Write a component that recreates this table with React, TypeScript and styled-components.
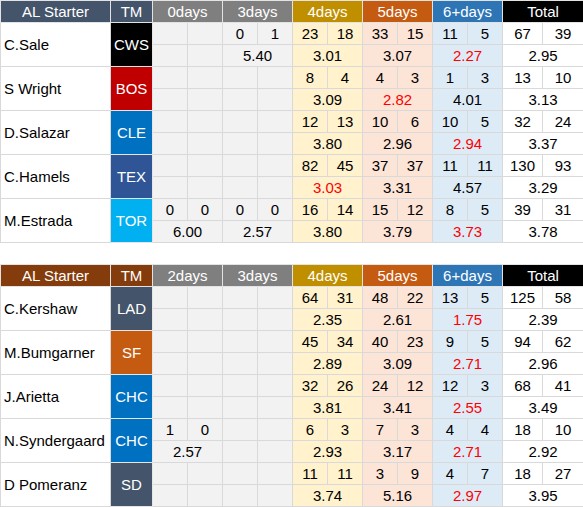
import React from "react";
import styled, { createGlobalStyle } from "styled-components";

type Tone = "grey" | "gold" | "orange" | "blue" | "white";

interface Split {
    w: number;
    l: number;
    era: string;
    red?: boolean;
}

interface Starter {
    name: string;
    team: string;
    teamColor: string;
    splits: (Split | null)[];
}

interface TableData {
    headColor: string;
    firstDays: string;
    rows: Starter[];
}

const tones: Tone[] = ["grey", "grey", "gold", "orange", "blue", "white"];

const headColors: Record<Tone, string> = {
    grey: "#7f7f7f",
    gold: "#bf8f00",
    orange: "#c55a11",
    blue: "#2e75b6",
    white: "#000000",
};

const cellColors: Record<Tone, string> = {
    grey: "#f2f2f2",
    gold: "#fff2cc",
    orange: "#fce4d6",
    blue: "#ddebf7",
    white: "#ffffff",
};

const tables: TableData[] = [
    {
        headColor: "#44546a",
        firstDays: "0days",
        rows: [
            {
                name: "C.Sale",
                team: "CWS",
                teamColor: "#000000",
                splits: [
                    null,
                    { w: 0, l: 1, era: "5.40" },
                    { w: 23, l: 18, era: "3.01" },
                    { w: 33, l: 15, era: "3.07" },
                    { w: 11, l: 5, era: "2.27", red: true },
                    { w: 67, l: 39, era: "2.95" },
                ],
            },
            {
                name: "S Wright",
                team: "BOS",
                teamColor: "#c00000",
                splits: [
                    null,
                    null,
                    { w: 8, l: 4, era: "3.09" },
                    { w: 4, l: 3, era: "2.82", red: true },
                    { w: 1, l: 3, era: "4.01" },
                    { w: 13, l: 10, era: "3.13" },
                ],
            },
            {
                name: "D.Salazar",
                team: "CLE",
                teamColor: "#0070c0",
                splits: [
                    null,
                    null,
                    { w: 12, l: 13, era: "3.80" },
                    { w: 10, l: 6, era: "2.96" },
                    { w: 10, l: 5, era: "2.94", red: true },
                    { w: 32, l: 24, era: "3.37" },
                ],
            },
            {
                name: "C.Hamels",
                team: "TEX",
                teamColor: "#2f5597",
                splits: [
                    null,
                    null,
                    { w: 82, l: 45, era: "3.03", red: true },
                    { w: 37, l: 37, era: "3.31" },
                    { w: 11, l: 11, era: "4.57" },
                    { w: 130, l: 93, era: "3.29" },
                ],
            },
            {
                name: "M.Estrada",
                team: "TOR",
                teamColor: "#00b0f0",
                splits: [
                    { w: 0, l: 0, era: "6.00" },
                    { w: 0, l: 0, era: "2.57" },
                    { w: 16, l: 14, era: "3.80" },
                    { w: 15, l: 12, era: "3.79" },
                    { w: 8, l: 5, era: "3.73", red: true },
                    { w: 39, l: 31, era: "3.78" },
                ],
            },
        ],
    },
    {
        headColor: "#843c0c",
        firstDays: "2days",
        rows: [
            {
                name: "C.Kershaw",
                team: "LAD",
                teamColor: "#44546a",
                splits: [
                    null,
                    null,
                    { w: 64, l: 31, era: "2.35" },
                    { w: 48, l: 22, era: "2.61" },
                    { w: 13, l: 5, era: "1.75", red: true },
                    { w: 125, l: 58, era: "2.39" },
                ],
            },
            {
                name: "M.Bumgarner",
                team: "SF",
                teamColor: "#c55a11",
                splits: [
                    null,
                    null,
                    { w: 45, l: 34, era: "2.89" },
                    { w: 40, l: 23, era: "3.09" },
                    { w: 9, l: 5, era: "2.71", red: true },
                    { w: 94, l: 62, era: "2.96" },
                ],
            },
            {
                name: "J.Arietta",
                team: "CHC",
                teamColor: "#0070c0",
                splits: [
                    null,
                    null,
                    { w: 32, l: 26, era: "3.81" },
                    { w: 24, l: 12, era: "3.41" },
                    { w: 12, l: 3, era: "2.55", red: true },
                    { w: 68, l: 41, era: "3.49" },
                ],
            },
            {
                name: "N.Syndergaard",
                team: "CHC",
                teamColor: "#0070c0",
                splits: [
                    { w: 1, l: 0, era: "2.57" },
                    null,
                    { w: 6, l: 3, era: "2.93" },
                    { w: 7, l: 3, era: "3.17" },
                    { w: 4, l: 4, era: "2.71", red: true },
                    { w: 18, l: 10, era: "2.92" },
                ],
            },
            {
                name: "D Pomeranz",
                team: "SD",
                teamColor: "#44546a",
                splits: [
                    null,
                    null,
                    { w: 11, l: 11, era: "3.74" },
                    { w: 3, l: 9, era: "5.16" },
                    { w: 4, l: 7, era: "2.97", red: true },
                    { w: 18, l: 27, era: "3.95" },
                ],
            },
        ],
    },
];

const GlobalStyle = createGlobalStyle`
    body {
        margin: 0;
        background: #ffffff;
        font-family: "Liberation Sans", Arial, sans-serif;
    }
`;

const Page = styled.div`
    display: flex;
    flex-direction: column;
    gap: 21px;
    width: 583px;
`;

const Table = styled.table`
    width: 583px;
    table-layout: fixed;
    border-collapse: collapse;
    font-size: 15px;
    color: #000000;
`;

const HeadCell = styled.th<{ $bg: string }>`
    height: 21px;
    padding: 0;
    background: ${(p) => p.$bg};
    color: #ffffff;
    font-weight: normal;
    text-align: center;
    border: 1px solid #e3e3e3;
    line-height: 19px;
`;

const Row = styled.tr`
    height: 21px;
`;

const NameCell = styled.td`
    padding: 0 0 0 3px;
    background: #ffffff;
    border: 1px solid #d9d9d9;
    white-space: nowrap;
`;

const TeamCell = styled.td<{ $bg: string }>`
    padding: 0;
    text-align: center;
    color: #ffffff;
    background: ${(p) => p.$bg};
    border: 1px solid #e6e6e6;
`;

const StatCell = styled.td<{ $tone: Tone; $red?: boolean }>`
    height: 21px;
    padding: 0;
    text-align: center;
    line-height: 19px;
    background: ${(p) => cellColors[p.$tone]};
    color: ${(p) => (p.$red ? "#ff0000" : "#000000")};
    border: 1px solid #d9d9d9;
`;

const colWidths = [110, 42, 35, 35, 35, 35, 35, 35, 35, 35, 35, 35, 40, 41];

function StarterRows({ row }: { row: Starter }) {
    return (
        <>
            <Row>
                <NameCell rowSpan={2}>{row.name}</NameCell>
                <TeamCell rowSpan={2} $bg={row.teamColor}>
                    {row.team}
                </TeamCell>
                {row.splits.map((s, i) => (
                    <React.Fragment key={i}>
                        <StatCell $tone={tones[i]}>{s ? s.w : ""}</StatCell>
                        <StatCell $tone={tones[i]}>{s ? s.l : ""}</StatCell>
                    </React.Fragment>
                ))}
            </Row>
            <Row>
                {row.splits.map((s, i) =>
                    s ? (
                        <StatCell key={i} colSpan={2} $tone={tones[i]} $red={s.red}>
                            {s.era}
                        </StatCell>
                    ) : (
                        <React.Fragment key={i}>
                            <StatCell $tone={tones[i]} />
                            <StatCell $tone={tones[i]} />
                        </React.Fragment>
                    )
                )}
            </Row>
        </>
    );
}

function StarterTable({ data }: { data: TableData }) {
    const labels = [data.firstDays, "3days", "4days", "5days", "6+days", "Total"];
    return (
        <Table>
            <colgroup>
                {colWidths.map((w, i) => (
                    <col key={i} style={{ width: w }} />
                ))}
            </colgroup>
            <thead>
                <tr>
                    <HeadCell $bg={data.headColor}>AL Starter</HeadCell>
                    <HeadCell $bg={data.headColor}>TM</HeadCell>
                    {labels.map((l, i) => (
                        <HeadCell key={l} colSpan={2} $bg={headColors[tones[i]]}>
                            {l}
                        </HeadCell>
                    ))}
                </tr>
            </thead>
            <tbody>
                {data.rows.map((r) => (
                    <StarterRows key={r.name} row={r} />
                ))}
            </tbody>
        </Table>
    );
}

export default function App() {
    return (
        <>
            <GlobalStyle />
            <Page>
                {tables.map((t) => (
                    <StarterTable key={t.firstDays} data={t} />
                ))}
            </Page>
        </>
    );
}
